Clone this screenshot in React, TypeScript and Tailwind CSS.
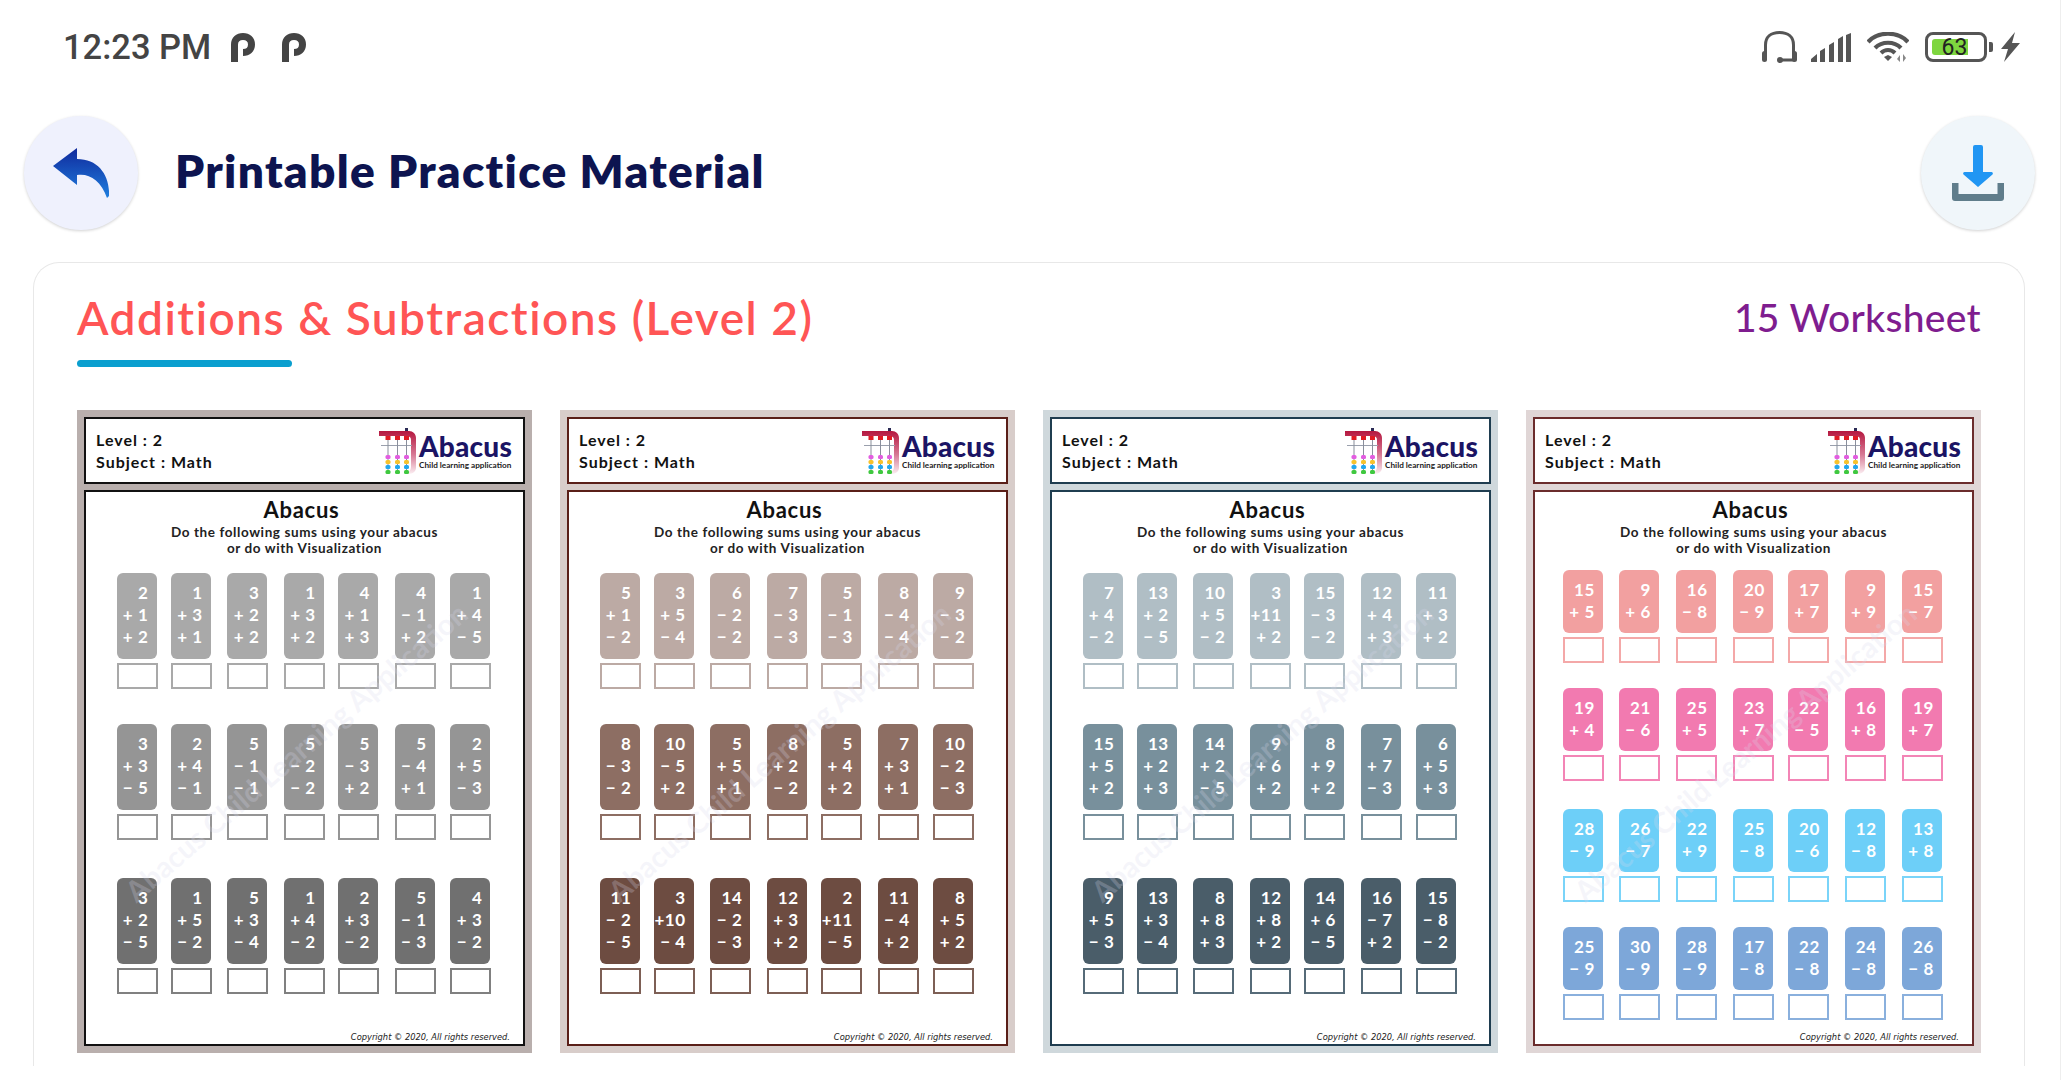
import React from "react";

type Row = { bg: string; bd: string; cards: string[] };
type SheetData = {
  outer: string;
  line: string;
  pad: string;
  tracks: string;
  gaps: string[];
  cardH: string;
  rows: Row[];
};

const T1 = "grid grid-cols-[54.3px_56.7px_56.3px_54.3px_56.7px_55.7px_41px]";
const T4 = "grid grid-cols-[56px_56.7px_57.3px_55px_56.7px_57.3px_41px]";

const sheets: SheetData[] = [
  {
    outer: "bg-[#b9afad]",
    line: "border-[#111111]",
    pad: "pl-[30.5px]",
    tracks: T1,
    gaps: ["mt-0", "mt-[35px]", "mt-[38px]"],
    cardH: "h-[86px]",
    rows: [
      { bg: "bg-[#a9a9a9]", bd: "border-[#a9a9a9]", cards: ["2|+ 1|+ 2", "1|+ 3|+ 1", "3|+ 2|+ 2", "1|+ 3|+ 2", "4|+ 1|+ 3", "4|− 1|+ 2", "1|+ 4|− 5"] },
      { bg: "bg-[#959595]", bd: "border-[#959595]", cards: ["3|+ 3|− 5", "2|+ 4|− 1", "5|− 1|− 1", "5|− 2|− 2", "5|− 3|+ 2", "5|− 4|+ 1", "2|+ 5|− 3"] },
      { bg: "bg-[#707070]", bd: "border-[#808080]", cards: ["3|+ 2|− 5", "1|+ 5|− 2", "5|+ 3|− 4", "1|+ 4|− 2", "2|+ 3|− 2", "5|− 1|− 3", "4|+ 3|− 2"] },
    ],
  },
  {
    outer: "bg-[#d8cdca]",
    line: "border-[#5a1f18]",
    pad: "pl-[30.5px]",
    tracks: T1,
    gaps: ["mt-0", "mt-[35px]", "mt-[38px]"],
    cardH: "h-[86px]",
    rows: [
      { bg: "bg-[#bcaaa4]", bd: "border-[#bcaaa4]", cards: ["5|+ 1|− 2", "3|+ 5|− 4", "6|− 2|− 2", "7|− 3|− 3", "5|− 1|− 3", "8|− 4|− 4", "9|− 3|− 2"] },
      { bg: "bg-[#8d6e63]", bd: "border-[#8d6e63]", cards: ["8|− 3|− 2", "10|− 5|+ 2", "5|+ 5|+ 1", "8|+ 2|− 2", "5|+ 4|+ 2", "7|+ 3|+ 1", "10|− 2|− 3"] },
      { bg: "bg-[#6d4c41]", bd: "border-[#7d5f55]", cards: ["11|− 2|− 5", "3|+10|− 4", "14|− 2|− 3", "12|+ 3|+ 2", "2|+11|− 5", "11|− 4|+ 2", "8|+ 5|+ 2"] },
    ],
  },
  {
    outer: "bg-[#cfd8dc]",
    line: "border-[#1f3d50]",
    pad: "pl-[30.5px]",
    tracks: T1,
    gaps: ["mt-0", "mt-[35px]", "mt-[38px]"],
    cardH: "h-[86px]",
    rows: [
      { bg: "bg-[#b0bec5]", bd: "border-[#b0bec5]", cards: ["7|+ 4|− 2", "13|+ 2|− 5", "10|+ 5|− 2", "3|+11|+ 2", "15|− 3|− 2", "12|+ 4|+ 3", "11|+ 3|+ 2"] },
      { bg: "bg-[#78909c]", bd: "border-[#78909c]", cards: ["15|+ 5|+ 2", "13|+ 2|+ 3", "14|+ 2|− 5", "9|+ 6|+ 2", "8|+ 9|+ 2", "7|+ 7|− 3", "6|+ 5|+ 3"] },
      { bg: "bg-[#4a5d69]", bd: "border-[#566b78]", cards: ["9|+ 5|− 3", "13|+ 3|− 4", "8|+ 8|+ 3", "12|+ 8|+ 2", "14|+ 6|− 5", "16|− 7|+ 2", "15|− 8|− 2"] },
    ],
  },
  {
    outer: "bg-[#e0d6d6]",
    line: "border-[#6b2c2c]",
    pad: "pl-[28px]",
    tracks: T4,
    gaps: ["mt-[-3px]", "mt-[25px]", "mt-[28px]", "mt-[25px]"],
    cardH: "h-[63px]",
    rows: [
      { bg: "bg-[#f2a0a0]", bd: "border-[#f4a8a8]", cards: ["15|+ 5", "9|+ 6", "16|− 8", "20|− 9", "17|+ 7", "9|+ 9", "15|− 7"] },
      { bg: "bg-[#f27ab0]", bd: "border-[#f385b6]", cards: ["19|+ 4", "21|− 6", "25|+ 5", "23|+ 7", "22|− 5", "16|+ 8", "19|+ 7"] },
      { bg: "bg-[#6dcff8]", bd: "border-[#7ad4f9]", cards: ["28|− 9", "26|− 7", "22|+ 9", "25|− 8", "20|− 6", "12|− 8", "13|+ 8"] },
      { bg: "bg-[#7da7d9]", bd: "border-[#8ab0dd]", cards: ["25|− 9", "30|− 9", "28|− 9", "17|− 8", "22|− 8", "24|− 8", "26|− 8"] },
    ],
  },
];

function LogoMark() {
  const cols = [9, 18.5, 27.5];
  const beads = [
    ["#e25de0", 27],
    ["#f7c22d", 32],
    ["#22a7ee", 37],
    ["#3fc83f", 42],
  ] as const;
  return (
    <svg width="37" height="46" viewBox="0 0 37 46" className="shrink-0">
      <defs>
        <linearGradient id="lg" x1="0" y1="0" x2="0" y2="1">
          <stop offset="0" stopColor="#b5173f" />
          <stop offset="0.55" stopColor="#d77a95" />
          <stop offset="1" stopColor="#fbeef2" />
        </linearGradient>
      </defs>
      <path d="M0 3h30c4 0 7 3 7 7v30c0 3-3 6-8 6h-2c3-2 5-4 5-7V12c0-3-2-4-4-4H0z" fill="url(#lg)" />
      <rect x="26" y="0" width="3" height="3" fill="#2b2b55" />
      <rect x="2" y="17" width="31" height="1" fill="#9aa0ad" />
      {cols.map((x) => (
        <g key={x}>
          <rect x={x - 0.5} y="8" width="1" height="36" fill="#8a8f9c" />
          <rect x={x - 2.5} y="8" width="5" height="4" fill="#e01b24" />
          {beads.map(([c, y]) => (
            <rect key={y} x={x - 2.5} y={y} width="5" height="4" rx="1.5" fill={c} />
          ))}
        </g>
      ))}
    </svg>
  );
}

function Sheet({ s }: { s: SheetData }) {
  return (
    <div className={`${s.outer} w-[455px] h-[643px] p-[7px] flex flex-col gap-[6px] font-['Lato',sans-serif] shrink-0`}>
      <div className={`h-[67px] shrink-0 bg-white border-2 ${s.line} flex items-center justify-between pl-[10px] pr-[11px]`}>
        <div className="text-[16px] leading-[22px] font-bold tracking-[1px] text-[#111]">
          <div>Level : 2</div>
          <div>Subject : Math</div>
        </div>
        <div className="flex items-center gap-[3px]">
          <LogoMark />
          <div className="flex flex-col">
            <span className="text-[28px] leading-[28px] font-black text-[#1b1464] tracking-[0.2px]">Abacus</span>
            <span className="text-[8.2px] leading-[10px] font-bold text-[#222] whitespace-nowrap">Child learning application</span>
          </div>
        </div>
      </div>
      <div className={`relative flex-1 bg-white border-2 ${s.line} flex flex-col overflow-hidden`}>
        <div className="h-[81px] shrink-0 pt-[5px] text-center text-[#111]">
          <div className="pr-[6px] text-[22px] leading-[26px] font-bold tracking-[0.7px]">Abacus</div>
          <div className="mt-[1px] text-[13.5px] leading-[16px] font-bold tracking-[0.6px] text-[#222]">
            Do the following sums using your abacus
            <br />
            or do with Visualization
          </div>
        </div>
        <div className={`${s.pad} flex flex-col`}>
          {s.rows.map((r, i) => (
            <div key={i} className={`${s.tracks} ${s.gaps[i]}`}>
              {r.cards.map((c, j) => (
                <div key={j} className="w-[41px]">
                  <div className={`${r.bg} ${s.cardH} w-[40px] rounded-[6px] pt-[9px] pr-[8px] text-right text-white text-[17px] leading-[22px] font-bold tracking-[0.6px] whitespace-pre`}>
                    {c.split("|").map((l, k) => (
                      <div key={k}>{l}</div>
                    ))}
                  </div>
                  <div className={`mt-[4px] h-[26px] w-[41px] bg-white border-2 ${r.bd}`} />
                </div>
              ))}
            </div>
          ))}
        </div>
        <div className="mt-auto pr-[13px] text-right font-['DejaVu_Sans',sans-serif] italic text-[8.3px] leading-[14px] text-[#222]">
          Copyright © 2020, All rights reserved.
        </div>
        <div className="absolute left-[-20px] top-[238px] w-[460px] text-center whitespace-nowrap rotate-[-40.7deg] text-[29px] leading-[44px] font-bold text-[#d7d7eb]/25 pointer-events-none">
          Abacus Child Learning Application
        </div>
      </div>
    </div>
  );
}

function PIcon() {
  return (
    <svg width="24" height="29" viewBox="0 0 24 29" className="shrink-0">
      <path d="M3.500 29V11.500C3.500 6.500 7 3.500 12 3.500s8.500 3 8.500 8-3.500 8-8.500 8" fill="none" stroke="#444" strokeWidth="7" />
    </svg>
  );
}

function StatusIcons() {
  return (
    <div className="flex items-center">
      <svg width="35" height="32" viewBox="0 0 35 32" className="mr-[14px]">
        <path d="M3.500 24V14C3.500 6 9 1.500 17.500 1.500S31.500 6 31.500 14V24" fill="none" stroke="#555" strokeWidth="3" />
        <rect x="0" y="20" width="5" height="11" rx="2.5" fill="#555" />
        <rect x="30" y="20" width="5" height="11" rx="2.5" fill="#555" />
        <path d="M17 29h15" stroke="#555" strokeWidth="3" />
        <circle cx="18" cy="29" r="3" fill="#555" />
      </svg>
      <svg width="40" height="29" viewBox="0 0 40 29" className="mr-[16px]">
        <path d="M0 29v-3l6-5v8zM9 29V18l5-3v14zM18 29V12l5-3v20zM27 29V6l5-3v26zM35 29V2l5-2v29z" fill="#555" />
      </svg>
      <svg width="42" height="30" viewBox="0 0 42 30" className="mr-[16px]">
        <path d="M1 10C11 -1 31 -1 41 10" fill="none" stroke="#555" strokeWidth="4.2" />
        <path d="M8 16C15 9 27 9 34 16" fill="none" stroke="#555" strokeWidth="4.2" />
        <path d="M14 21C18 17 24 17 28 21" fill="none" stroke="#555" strokeWidth="4" />
        <path d="M17 25l4-2 4 2-4 4z" fill="#555" />
        <path d="M33 23v7l-3-3zM36 22v8l3-4z" fill="#888" />
      </svg>
      <div className="relative w-[62px] h-[30px] rounded-[8px] border-[3px] border-[#555] box-border mr-[2px]">
        <div className="absolute left-[4px] top-[4px] h-[16px] w-[36px] rounded-l-[3px] bg-[#7ed63f]" />
        <span className="absolute inset-0 flex items-center justify-center text-[23px] leading-none text-[#222] pr-[3px]">63</span>
      </div>
      <div className="w-[4px] h-[10px] rounded-r-[2px] bg-[#555] mr-[8px]" />
      <svg width="19" height="30" viewBox="0 0 19 30">
        <path d="M14 0L0 17h7L3 30 19 11h-8z" fill="#555" />
      </svg>
    </div>
  );
}

export default function App() {
  return (
    <div className="w-[2061px] h-[1080px] overflow-hidden bg-white border-r border-[#eeeeee] box-border font-['Roboto',sans-serif]">
      <div className="h-[94px] flex items-center justify-between pl-[63px] pr-[40px]">
        <div className="flex items-center">
          <span className="text-[34.5px] leading-none font-medium text-[#444] mr-[20px] whitespace-nowrap">12:23 PM</span>
          <PIcon />
          <span className="w-[27px]" />
          <PIcon />
        </div>
        <StatusIcons />
      </div>
      <div className="mt-[22px] h-[114px] flex items-center justify-between pl-[24px] pr-[25px]">
        <div className="flex items-center">
          <div className="w-[114px] h-[114px] rounded-full bg-[#eff1fd] shadow-[0_1px_3px_rgba(0,0,0,0.18)] pl-[29px] pt-[32px]">
            <svg width="56" height="50" viewBox="0 0 56 50">
              <defs>
                <linearGradient id="bk" x1="0" y1="0" x2="0" y2="1">
                  <stop offset="0" stopColor="#10299c" />
                  <stop offset="1" stopColor="#1f7fdf" />
                </linearGradient>
              </defs>
              <path d="M24 0L0 18 24 37V27C36 25 48 32 54 50L56 48C57 28 46 11 24 11Z" fill="url(#bk)" />
            </svg>
          </div>
          <span className="ml-[37px] mb-[4px] font-['Lato',sans-serif] text-[46px] leading-none font-extrabold tracking-[1.3px] text-[#0d1450] whitespace-nowrap">
            Printable Practice Material
          </span>
        </div>
        <div className="w-[114px] h-[114px] rounded-full bg-[#f0f6fa] shadow-[0_1px_3px_rgba(0,0,0,0.18)] flex items-center justify-center">
          <svg width="52" height="56" viewBox="0 0 52 56">
            <path d="M21 2a2 2 0 0 1 2-2h6a2 2 0 0 1 2 2v25h8.500a1.500 1.500 0 0 1 1 2.500L26 42 11.500 29.500a1.500 1.500 0 0 1 1-2.500H21z" fill="#2196f3" />
            <path d="M0 38h6.500v11h39V38H52v15a3 3 0 0 1-3 3H3a3 3 0 0 1-3-3z" fill="#607d8b" />
          </svg>
        </div>
      </div>
      <div className="mt-[32px] ml-[33px] w-[1992px] h-[804px] bg-white rounded-t-[26px] border border-b-0 border-[#e8e8e8] box-border px-[43px]">
        <div className="h-[97px] pt-[12px] flex items-center justify-between font-['Lato',sans-serif]">
          <span className="text-[46px] leading-none font-semibold tracking-[1.5px] text-[#ff5555] whitespace-nowrap">Additions &amp; Subtractions (Level 2)</span>
          <span className="text-[39px] leading-none font-medium tracking-[0.3px] text-[#7f1d8f] whitespace-nowrap">15 Worksheet</span>
        </div>
        <div className="w-[215px] h-[7px] rounded-full bg-[#0a9fcf]" />
        <div className="mt-[43px] flex justify-between">
          {sheets.map((s, i) => (
            <Sheet key={i} s={s} />
          ))}
        </div>
      </div>
    </div>
  );
}
